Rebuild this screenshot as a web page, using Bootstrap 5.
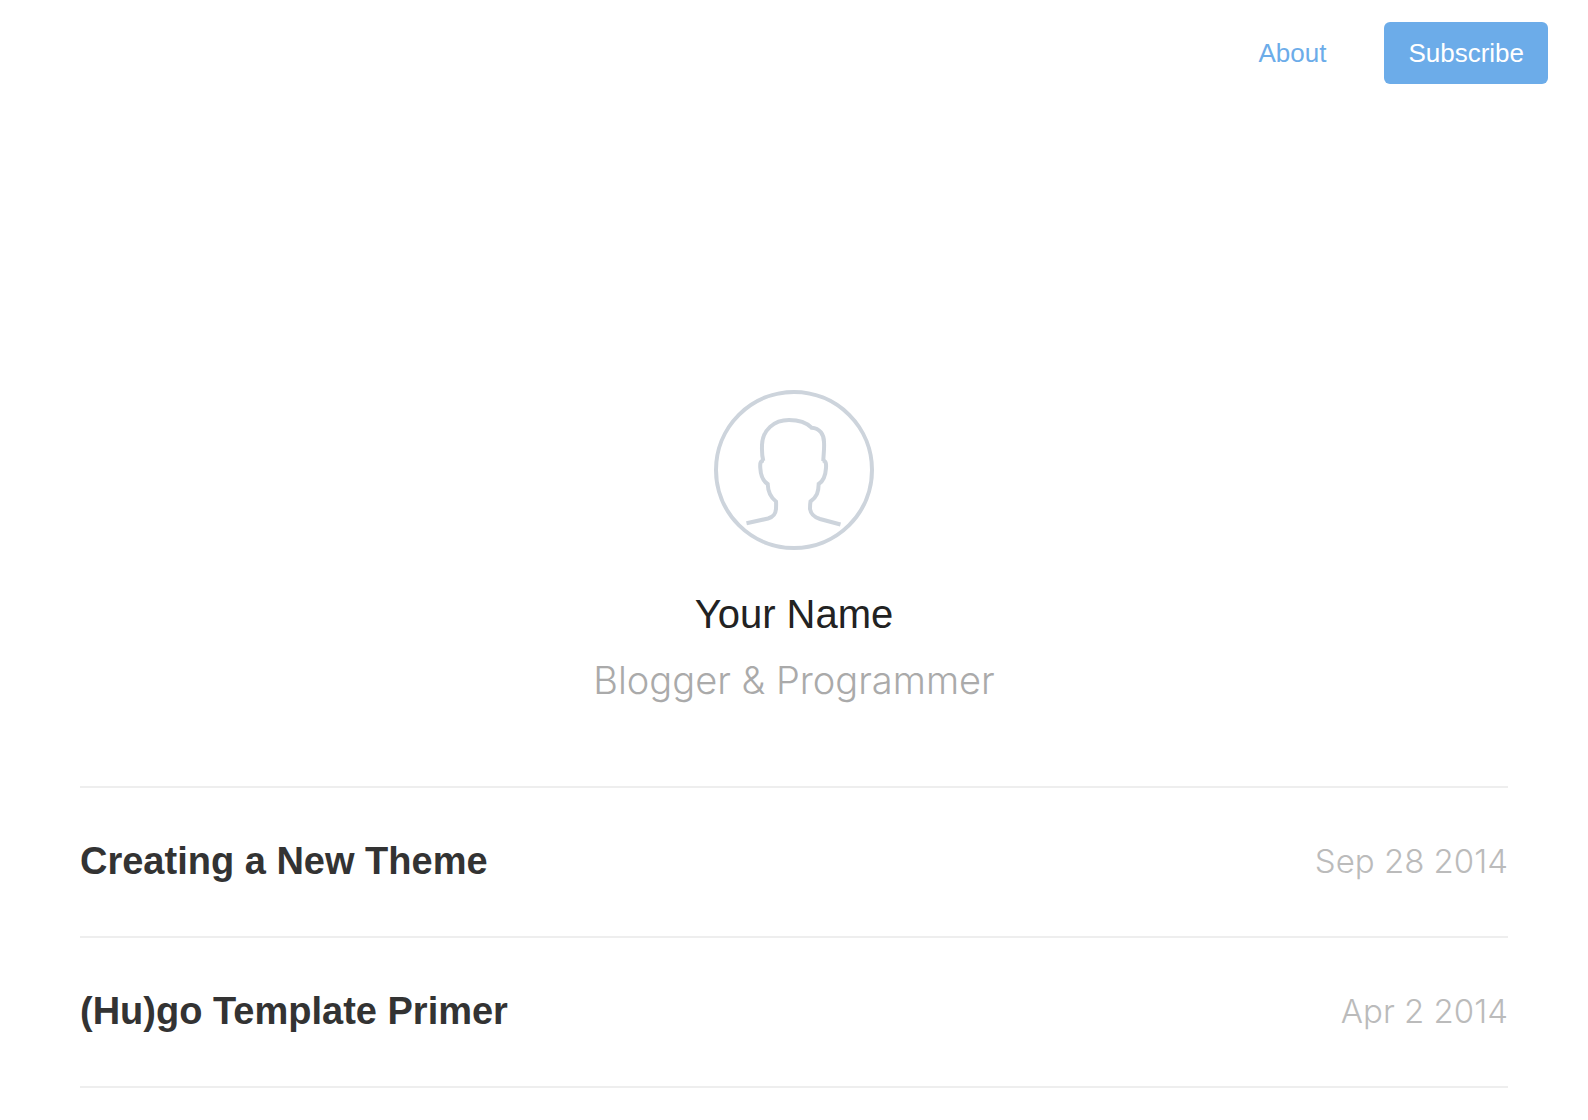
<!DOCTYPE html>
<html lang="en">
<head>
<meta charset="utf-8">
<meta name="viewport" content="width=device-width, initial-scale=1">
<title>Your Name</title>
<link href="https://cdn.jsdelivr.net/npm/bootstrap@5.3.0/dist/css/bootstrap.min.css" rel="stylesheet">
<style>
body { font-family: "Liberation Sans", Arial, sans-serif; color: #222; background: #fff; }
.site-nav { padding: 22px 40px 0; gap: 34px; }
.nav-item-link { font-size: 26px; line-height: 38px; padding: 12px 24px; border: 0; border-radius: 6px; color: #6cace9; text-decoration: none; }
.nav-item-fill { background: #6cace9; color: #fff; }
.profile { padding: 306px 80px 73px; }
.avatar { width: 160px; height: 160px; margin-bottom: 31px; }
.profile-line { font-size: 40px; line-height: 66px; margin: 0; font-weight: 400; }
.thin-text { font-family: Inter, "Liberation Sans", sans-serif; font-weight: 300; }
.profile-role { font-size: 38px; color: #aaa; }
.posts { margin: 0 80px; border-top: 2px solid #eee; }
.post-row { min-height: 150px; padding-bottom: 2px; border-bottom: 2px solid #eee; }
.post-title { font-size: 38px; line-height: 48px; font-weight: 700; color: #333; text-decoration: none; }
.post-date { font-size: 33px; line-height: 48px; color: #bbb; }
</style>
</head>
<body>
<nav class="site-nav d-flex justify-content-end align-items-center">
  <a class="nav-item-link" href="#about">About</a>
  <button class="nav-item-link nav-item-fill" type="button">Subscribe</button>
</nav>
<header class="profile text-center">
  <svg class="avatar d-block mx-auto" viewBox="0 0 160 160" fill="none" stroke="#cdd4dc" stroke-width="4" role="img" aria-label="Avatar">
    <circle cx="80" cy="80" r="78"/>
    <path d="M50 70.500C46 70.500 46 74 46.300 78C46.700 86 49 91 53.700 94C54 102 56 107 62 111.500C62.300 114 62 117 62 119C61.500 125 59 127 54 128.500L32.500 133.300"/>
    <path d="M49.300 71C47.500 64 48 60 48 55C48.500 40 60 30 75 30C84 30 92 32 97.500 37.700C106 38 110 45 110 52C110.500 59 109.500 64 109.300 71"/>
    <path d="M108.500 70.500C112 70.500 112.300 74 112 78C111.500 86 109.500 91 104.700 94C104.500 102 103 107 96.500 111.500C96 114 96 116 96 119C97 125 101 127.500 106 129L126.500 134.500"/>
  </svg>
  <h1 class="profile-line">Your Name</h1>
  <p class="profile-line profile-role thin-text">Blogger &amp; Programmer</p>
</header>
<main class="posts">
  <article class="post-row d-flex justify-content-between align-items-center">
    <a class="post-title" href="#creating-a-new-theme">Creating a New Theme</a>
    <time class="post-date thin-text" datetime="2014-09-28">Sep 28 2014</time>
  </article>
  <article class="post-row d-flex justify-content-between align-items-center">
    <a class="post-title" href="#hugo-template-primer">(Hu)go Template Primer</a>
    <time class="post-date thin-text" datetime="2014-04-02">Apr 2 2014</time>
  </article>
</main>
<script src="https://cdn.jsdelivr.net/npm/bootstrap@5.3.0/dist/js/bootstrap.bundle.min.js"></script>
</body>
</html>
